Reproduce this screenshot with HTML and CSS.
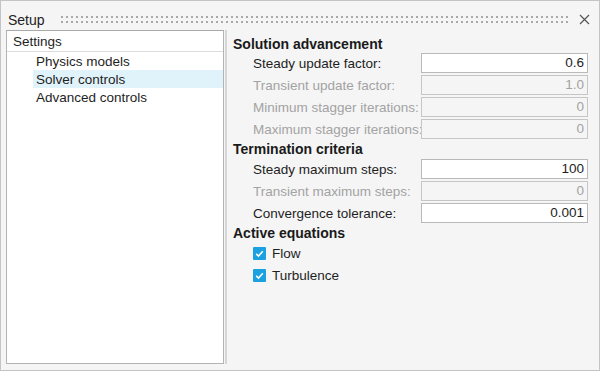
FILE: index.html
```html
<!DOCTYPE html>
<html>
<head>
<meta charset="utf-8">
<link rel="stylesheet" href="styles.css">
</head>
<body>
<div class="window">
  <div class="titlebar">
    <span class="title">Setup</span>
    <span class="grip"></span>
    <svg class="close" width="11" height="11" viewBox="0 0 11 11"><path d="M1 1L10 10M10 1L1 10" stroke="#555" stroke-width="1.2" fill="none"/></svg>
  </div>
  <div class="body">
    <div class="tree">
      <div class="tree-head">Settings</div>
      <div class="tree-item">Physics models</div>
      <div class="tree-item selected">Solver controls</div>
      <div class="tree-item">Advanced controls</div>
    </div>
    <div class="splitter"></div>
    <div class="form">
      <div class="heading first">Solution advancement</div>
      <div class="row"><span class="label">Steady update factor:</span><span class="field">0.6</span></div>
      <div class="row disabled"><span class="label">Transient update factor:</span><span class="field">1.0</span></div>
      <div class="row disabled"><span class="label">Minimum stagger iterations:</span><span class="field">0</span></div>
      <div class="row disabled"><span class="label">Maximum stagger iterations:</span><span class="field">0</span></div>
      <div class="heading">Termination criteria</div>
      <div class="row"><span class="label">Steady maximum steps:</span><span class="field">100</span></div>
      <div class="row disabled"><span class="label">Transient maximum steps:</span><span class="field">0</span></div>
      <div class="row"><span class="label">Convergence tolerance:</span><span class="field">0.001</span></div>
      <div class="heading">Active equations</div>
      <div class="check-row"><span class="checkbox"><svg width="13" height="13" viewBox="0 0 13 13"><path d="M3.2 6.8L5.5 9L9.8 4.2" stroke="#fff" stroke-width="1.6" fill="none"/></svg></span><span class="check-label">Flow</span></div>
      <div class="check-row"><span class="checkbox"><svg width="13" height="13" viewBox="0 0 13 13"><path d="M3.2 6.8L5.5 9L9.8 4.2" stroke="#fff" stroke-width="1.6" fill="none"/></svg></span><span class="check-label">Turbulence</span></div>
    </div>
  </div>
</div>
</body>
</html>
```
FILE: styles.css
```css
* { box-sizing: border-box; }
html, body { margin: 0; padding: 0; }
body {
  font-family: "Liberation Sans", Arial, sans-serif;
  font-size: 13.5px;
  color: #1e1e1e;
  background: #f5f5f5;
}
.window {
  width: 600px;
  height: 371px;
  border: 1px solid #c4c4c4;
  background: #f5f5f5;
  display: flex;
  flex-direction: column;
}
.titlebar {
  height: 29px;
  flex: none;
  display: flex;
  align-items: flex-start;
  padding: 11px 9px 0 7px;
}
.title {
  font-size: 14px;
  line-height: 16px;
  color: #222;
}
.grip {
  flex: 1;
  height: 7px;
  margin: 4px 8px 0 16px;
  background-image:
    linear-gradient(to bottom, transparent 2px, #f5f5f5 2px),
    linear-gradient(to right, #a9a9a9 2px, transparent 2px);
  background-size: 5px 5px, 5px 5px;
}
.close {
  margin-top: 2px;
  flex: none;
}
.body {
  height: 334px;
  flex: none;
  display: flex;
  padding-left: 5px;
}
.tree {
  width: 218px;
  height: 334px;
  background: #fff;
  border: 1px solid #b4b4b4;
  border-top-color: #a9a9a9;
}
.tree-head {
  height: 21px;
  line-height: 21px;
  padding-left: 6px;
  border-bottom: 1px solid #dcdcdc;
}
.tree-item {
  height: 18px;
  line-height: 19px;
  margin-left: 26px;
  padding-left: 3px;
}
.tree-item.selected {
  background: #e1f3fa;
}
.splitter {
  width: 2px;
  margin-left: 1px;
  background: #d6d6d6;
}
.form {
  flex: 1;
  padding: 4px 0 0 6px;
}
.heading {
  height: 18px;
  line-height: 18px;
  font-weight: bold;
  font-size: 14px;
  color: #1a1a1a;
}
.heading.first {
  line-height: 20px;
}
.row {
  display: grid;
  grid-template-columns: 168px 167px;
  height: 22px;
  align-items: center;
  margin-left: 20px;
}
.label {
  white-space: nowrap;
}
.field {
  height: 20px;
  line-height: 18px;
  background: #fff;
  border: 1px solid #b9b9b9;
  text-align: right;
  padding-right: 3px;
}
.row.disabled .label,
.row.disabled .field {
  color: #a3a3a3;
}
.row.disabled .field {
  background: #f5f5f5;
  border-color: #c6c6c6;
}
.check-row {
  display: flex;
  align-items: center;
  height: 22px;
  margin-left: 20px;
}
.checkbox {
  width: 13px;
  height: 13px;
  background: #1ba1df;
  display: flex;
  border-radius: 1px;
}
.check-label {
  margin-left: 6px;
}
```
